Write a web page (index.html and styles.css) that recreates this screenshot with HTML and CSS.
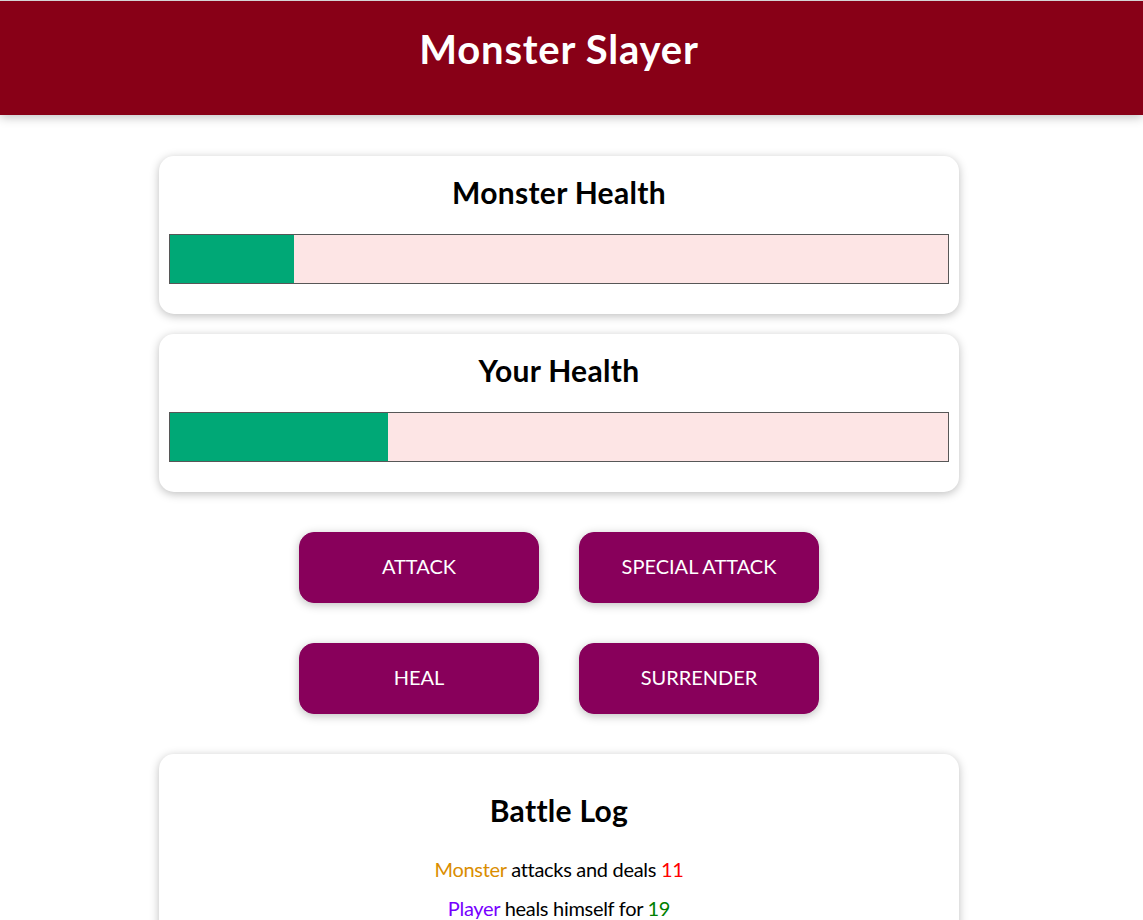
FILE: index.html
```html
<!DOCTYPE html>
<html lang="en">
<head>
    <meta charset="UTF-8">
    <meta name="viewport" content="width=device-width, initial-scale=1.0">
    <title>Monster Slayer</title>
    <link rel="stylesheet" href="styles.css">
</head>
<body>
    <header>
        <h1>Monster Slayer</h1>
    </header>

    <div id="game">
        <section id="monster" class="container">
            <h2>Monster Health</h2>
            <div class="healthbar">
                <div class="healthbar__value" style="width: 16%;"></div>
            </div>
        </section>

        <section id="player" class="container">
            <h2>Your Health</h2>
            <div class="healthbar">
                <div class="healthbar__value" style="width: 28%;"></div>
            </div>
        </section>

        <section id="controls">
            <button>ATTACK</button>
            <button>SPECIAL ATTACK</button>
            <button>HEAL</button>
            <button>SURRENDER</button>
        </section>

        <section id="log" class="container">
            <h2>Battle Log</h2>
            <ul>
                <li>
                    <span class="log--monster">Monster</span>
                    attacks and deals <span class="log--damage">11</span>
                </li>
                <li>
                    <span class="log--player">Player</span>
                    heals himself for <span class="log--heal">19</span>
                </li>
            </ul>
        </section>
    </div>
</body>
</html>
```

FILE: styles.css
```css
* {
    box-sizing: border-box;
}

html {
    font-family: Lato, "Noto Sans", sans-serif;
    font-size: 20px;
}

body {
    margin: 0;
    border-top: 1px solid #d4d4d4;
    color: #000;
}

header {
    padding: 24px 25px 42px 0;
    background-color: #880017;
    color: white;
    text-align: center;
    margin-bottom: 41px;
    box-shadow: 0 2px 10px rgba(0, 0, 0, 0.26);
}

header h1 {
    margin: 0;
    font-size: 40px;
    line-height: 48px;
    font-weight: 700;
    letter-spacing: 0.8px;
}

#game {
    padding-right: 25px;
}

section {
    width: 90%;
    max-width: 800px;
    margin: 20px auto;
}

.container {
    text-align: center;
    padding: 10px;
    box-shadow: 0 2px 10px rgba(0, 0, 0, 0.26);
    border-radius: 15px;
    background: white;
}

.container h2 {
    margin: 8px 0 24px;
    font-size: 30px;
    line-height: 36px;
    font-weight: 700;
    letter-spacing: 0.3px;
}

.healthbar {
    width: 100%;
    height: 50px;
    border: 1px solid #575757;
    margin: 0 0 20px;
    background: #fde5e5;
}

.healthbar__value {
    background-color: #00a876;
    height: 100%;
}

#controls {
    display: flex;
    flex-wrap: wrap;
    justify-content: center;
}

button {
    font: inherit;
    font-size: 20px;
    line-height: 29px;
    border: 1px solid #88005b;
    background-color: #88005b;
    color: white;
    padding: 19px 10px 21px;
    border-radius: 15px;
    margin: 20px;
    width: 240px;
    height: 71px;
    cursor: pointer;
    box-shadow: 0 2px 10px rgba(0, 0, 0, 0.26);
}

#log h2 {
    margin: 28px 0 27px;
}

#log ul {
    list-style: none;
    margin: 0;
    padding: 0 0 20px;
}

#log li {
    margin: 10px 0;
    line-height: 29px;
    letter-spacing: -0.3px;
}

.log--player {
    color: #7700ff;
}

.log--monster {
    color: #da8d00;
}

.log--damage {
    color: red;
}

.log--heal {
    color: green;
}
```
